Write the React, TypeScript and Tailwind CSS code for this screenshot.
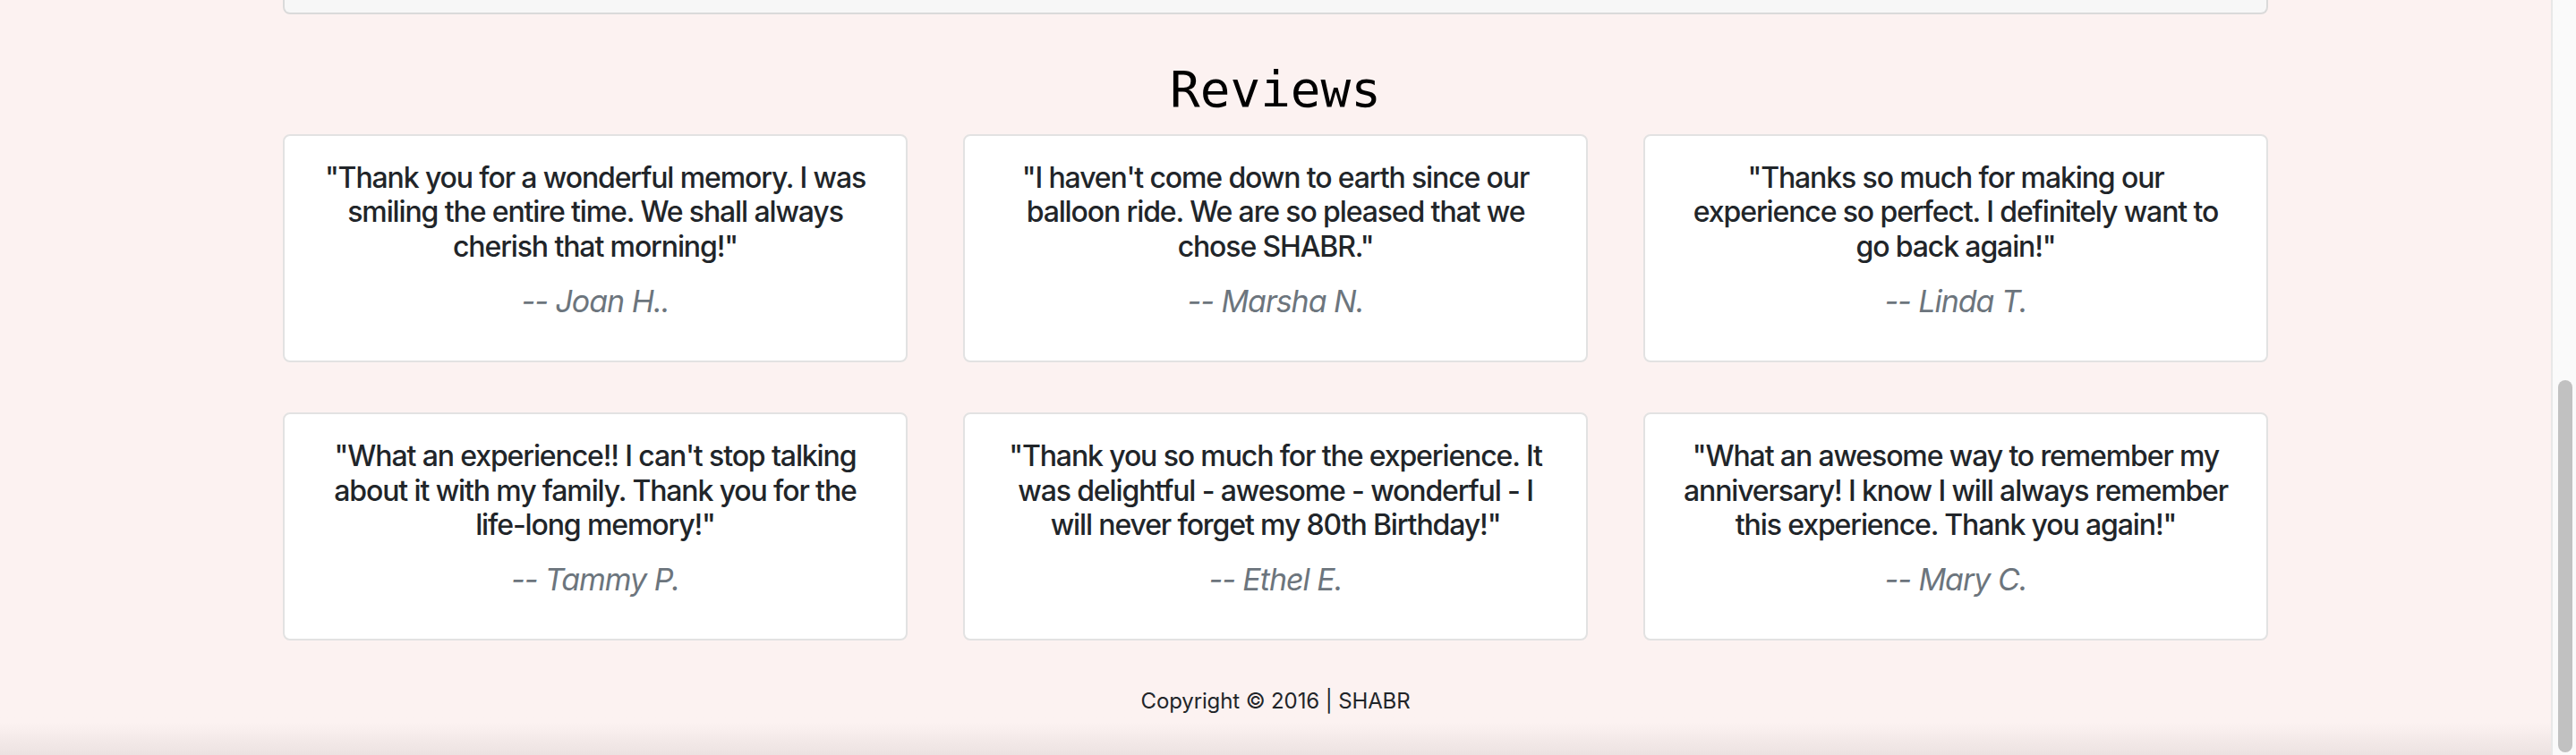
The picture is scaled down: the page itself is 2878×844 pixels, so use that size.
const reviews = [
  {
    quote: '"Thank you for a wonderful memory. I was smiling the entire time. We shall always cherish that morning!"',
    name: "-- Joan H..",
  },
  {
    quote: '"I haven\'t come down to earth since our balloon ride. We are so pleased that we chose SHABR."',
    name: "-- Marsha N.",
  },
  {
    quote: '"Thanks so much for making our experience so perfect. I definitely want to go back again!"',
    name: "-- Linda T.",
  },
  {
    quote: '"What an experience!! I can\'t stop talking about it with my family. Thank you for the life-long memory!"',
    name: "-- Tammy P.",
  },
  {
    quote: '"Thank you so much for the experience. It was delightful - awesome - wonderful - I will never forget my 80th Birthday!"',
    name: "-- Ethel E.",
  },
  {
    quote: '"What an awesome way to remember my anniversary! I know I will always remember this experience. Thank you again!"',
    name: "-- Mary C.",
  },
]

function ReviewCard({ quote, name }: { quote: string; name: string }) {
  return (
    <div className="bg-white border-2 border-[#e2e2e2] rounded-lg px-[36px] pt-[28px] pb-[46px] text-center">
      <h6 className="text-[32px] leading-[38.4px] font-medium text-[#212529] tracking-[-0.035em]">{quote}</h6>
      <p className="mt-[21px] text-[34px] leading-[41px] italic font-normal text-[#6c757d] tracking-[-0.03em]">{name}</p>
    </div>
  )
}

export default function App() {
  return (
    <div className="flex h-[844px] w-full overflow-hidden bg-[#fcf2f1]" style={{ fontFamily: "Inter, 'Noto Sans', sans-serif" }}>
      <div className="flex-1 flex flex-col">
        {/* bottom of the previous panel */}
        <div className="w-[2218px] mx-auto h-[16px] bg-[#f7f7f7] border-2 border-t-0 border-[#dadada] rounded-b-lg" />

        <section className="w-[2218px] mx-auto">
          <h2
            className="mt-[50px] mb-[17px] text-center text-[56px] leading-[67px] text-black"
            style={{ fontFamily: "'DejaVu Sans Mono', monospace" }}
          >
            Reviews
          </h2>
          <div className="grid grid-cols-3 gap-x-[62px] gap-y-[56px]">
            {reviews.map((r) => (
              <ReviewCard key={r.name} quote={r.quote} name={r.name} />
            ))}
          </div>
        </section>

        {/* Footer */}
        <footer className="flex-1 mt-[48px] bg-gradient-to-b from-[#fcf2f1] from-55% to-[#ece2e1]">
          <p className="text-center text-[24px] leading-[40px] text-[#212529] tracking-[-0.005em]">Copyright © 2016 | SHABR</p>
        </footer>
      </div>

      {/* scrollbar */}
      <div className="w-[28px] flex flex-col justify-end bg-[#fafafa] border-l-2 border-[#e8e8e8] pb-[3px] pl-[6px]">
        <div className="w-[16px] h-[416px] rounded-full bg-[#c1c1c1]" />
      </div>
    </div>
  )
}
